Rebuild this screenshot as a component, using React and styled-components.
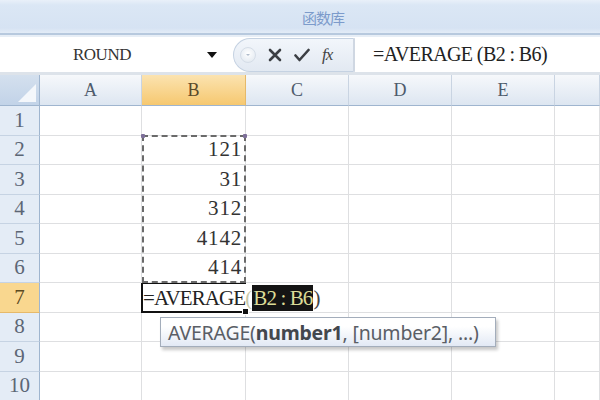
import React from "react";
import styled, { createGlobalStyle } from "styled-components";

const GlobalStyle = createGlobalStyle`
  html, body {
    margin: 0;
    padding: 0;
    background: #fff;
    overflow: hidden;
  }
  #root {
    width: 600px;
    height: 400px;
  }
`;

const Page = styled.div`
  width: 600px;
  height: 400px;
  display: flex;
  flex-direction: column;
  overflow: hidden;
  font-family: "Liberation Serif", "Noto Sans CJK SC", serif;
`;

const Ribbon = styled.div`
  height: 35px;
  flex: none;
  box-sizing: border-box;
  background: linear-gradient(#e9f0f9 0px, #dbe7f5 5px, #d6e3f3 28px, #e3ecf7 33px);
  border-bottom: 2px solid #b7c9de;
  display: flex;
  align-items: center;
  justify-content: center;
  padding-left: 46px;
`;

const GroupLabel = styled.span`
  font-family: "Noto Sans CJK SC", sans-serif;
  font-size: 15px;
  color: #7c9bcb;
  letter-spacing: -1px;
  margin-top: 2px;
`;

const FormulaBar = styled.div`
  height: 40px;
  flex: none;
  box-sizing: border-box;
  background: #fff;
  border-top: 2px solid #e7eef6;
  border-bottom: 3px solid #dde3ea;
  display: flex;
  align-items: center;
`;

const NameBox = styled.div`
  width: 233px;
  flex: none;
  display: flex;
  align-items: center;
  box-sizing: border-box;
  padding-left: 73px;
  padding-right: 16px;
  font-size: 17px;
  color: #333;
  letter-spacing: -0.5px;
`;

const DropArrow = styled.span`
  margin-left: auto;
  width: 0;
  height: 0;
  border-left: 5px solid transparent;
  border-right: 5px solid transparent;
  border-top: 6px solid #111;
`;

const ButtonPill = styled.div`
  width: 122px;
  height: 34px;
  flex: none;
  box-sizing: border-box;
  border-radius: 17px 0 0 17px;
  border: 1px solid #c5d2e2;
  border-right: 2px solid #cfd7e2;
  background: linear-gradient(#f2f6fb, #e2e9f2);
  display: flex;
  align-items: center;
  padding-left: 6px;
  gap: 12px;
`;

const Knob = styled.span`
  width: 14px;
  height: 14px;
  border-radius: 50%;
  background: radial-gradient(circle at 50% 40%, #ffffff, #dde5ee);
  border: 1px solid #d5dde7;
  display: flex;
  align-items: center;
  justify-content: center;
  &::after {
    content: "";
    width: 0;
    height: 0;
    border-left: 2px solid transparent;
    border-right: 2px solid transparent;
    border-top: 2px solid #b0bccb;
  }
`;

const Fx = styled.span`
  font-family: "Liberation Serif", serif;
  font-style: italic;
  font-size: 17px;
  color: #444;
  letter-spacing: -1px;
`;

const FormulaText = styled.div`
  padding-left: 18px;
  font-size: 20px;
  color: #222;
  letter-spacing: -0.6px;
  white-space: nowrap;
`;

const Sheet = styled.div`
  flex: 1;
  display: grid;
  grid-template-columns: 40px 102px 104px 103px 103px 103px 1fr;
  grid-template-rows: 31px repeat(10, 29.5px);
`;

const Corner = styled.div`
  grid-row: 1;
  grid-column: 1;
  background: linear-gradient(#d4e0ee, #c2d3e8);
  border-right: 1px solid #9fb5cf;
  border-bottom: 1px solid #9fb5cf;
  position: relative;
  overflow: hidden;
  &::after {
    content: "";
    position: absolute;
    right: 3px;
    bottom: 3px;
    border-left: 18px solid transparent;
    border-bottom: 18px solid #f4f7fb;
  }
`;

const ColHead = styled.div`
  grid-row: 1;
  grid-column: ${(p) => p.$col};
  display: flex;
  align-items: center;
  justify-content: center;
  font-size: 18px;
  color: ${(p) => (p.$active ? "#5a4a2a" : "#4e5b6c")};
  background: ${(p) =>
    p.$active
      ? "linear-gradient(#fbe3b0, #f6c870)"
      : "linear-gradient(#f6f8fb, #dde6f1)"};
  border-right: 1px solid ${(p) => (p.$active ? "#e5b96a" : "#c9d4e2")};
  border-bottom: 1px solid #9fb5cf;
`;

const RowHead = styled.div`
  grid-row: ${(p) => p.$row};
  grid-column: 1;
  display: flex;
  align-items: center;
  justify-content: center;
  font-size: 21px;
  color: ${(p) => (p.$active ? "#5b4a1f" : "#5c6675")};
  background: ${(p) => (p.$active ? "#f9d78f" : "#e4ecf6")};
  border-right: 1px solid #9fb5cf;
  border-bottom: 1px solid ${(p) => (p.$active ? "#e6b96a" : "#c6d3e3")};
`;

const Cell = styled.div`
  grid-row: ${(p) => p.$row};
  grid-column: ${(p) => p.$col};
  border-right: 1px solid #dedfe1;
  border-bottom: 1px solid #dedfe1;
  display: flex;
  align-items: flex-end;
  justify-content: flex-end;
  padding: 0 3px 2px 0;
  font-size: 21px;
  color: #333;
  letter-spacing: 0.8px;
  min-width: 0;
`;

const Marquee = styled.div`
  grid-column: 3;
  grid-row: 3 / 8;
  margin: -1px 0 0 0;
  border: 2px dashed #6a6a6a;
  position: relative;
  pointer-events: none;
  z-index: 2;
  &::before,
  &::after {
    content: "";
    position: absolute;
    top: -3px;
    width: 4px;
    height: 4px;
    background: #7d6f99;
    border-radius: 1px;
  }
  &::before {
    left: -3px;
  }
  &::after {
    right: -3px;
  }
`;

const ActiveCell = styled.div`
  grid-column: 3;
  grid-row: 8;
  border-left: 2px solid #111;
  border-bottom: 2px solid #111;
  border-top: 1px solid #111;
  margin-left: -1px;
  position: relative;
  z-index: 3;
  display: flex;
  align-items: center;
  white-space: nowrap;
  font-size: 21px;
  color: #222;
  letter-spacing: -0.9px;
  &::after {
    content: "";
    position: absolute;
    right: -3px;
    bottom: -4px;
    width: 5px;
    height: 5px;
    background: #111;
    border: 1px solid #fff;
  }
`;

const EditText = styled.span`
  background: #fff;
  padding-right: 2px;
  display: inline-flex;
  align-items: center;
  margin-top: 2px;
`;

const Paren = styled.span`
  color: ${(p) => p.color};
`;

const RefHighlight = styled.span`
  background: #141414;
  color: #dcdc98;
  padding: 1px 1px 0 1px;
  margin-left: 1px;
`;

const Tip = styled.div`
  position: absolute;
  top: 33px;
  left: 17px;
  width: 336px;
  height: 30px;
  box-sizing: border-box;
  border: 1px solid #a3adbb;
  background: linear-gradient(#ffffff 30%, #e2e9f5);
  box-shadow: 2px 3px 3px rgba(0, 0, 0, 0.22);
  display: flex;
  align-items: center;
  padding-left: 7px;
  font-family: "Noto Sans", "Open Sans", sans-serif;
  font-size: 19.5px;
  color: #5a5e66;
  letter-spacing: -0.2px;
  b {
    color: #43474d;
    font-weight: 700;
  }
`;

const cols = ["A", "B", "C", "D", "E", ""];
const values = { 2: "121", 3: "31", 4: "312", 5: "4142", 6: "414" };

const XIcon = () => (
  <svg width="14" height="14" viewBox="0 0 14 14">
    <path d="M2 2 L12 12 M12 2 L2 12" stroke="#3c3f44" strokeWidth="2.6" strokeLinecap="round" />
  </svg>
);

const CheckIcon = () => (
  <svg width="16" height="14" viewBox="0 0 16 14">
    <path d="M1.5 7.5 L5.5 12 L14.5 2" stroke="#3c3f44" strokeWidth="2.6" fill="none" strokeLinecap="round" strokeLinejoin="round" />
  </svg>
);

export default function App() {
  const rows = [];
  for (let r = 1; r <= 10; r++) {
    rows.push(
      <RowHead key={"h" + r} $row={r + 1} $active={r === 7}>
        {r}
      </RowHead>
    );
    cols.forEach((c, i) => {
      if (c === "B" && r === 7) return;
      rows.push(
        <Cell key={r + "-" + i} $row={r + 1} $col={i + 2}>
          {c === "B" ? values[r] : null}
        </Cell>
      );
    });
  }

  return (
    <Page>
      <GlobalStyle />
      <Ribbon>
        <GroupLabel>函数库</GroupLabel>
      </Ribbon>
      <FormulaBar>
        <NameBox>
          ROUND
          <DropArrow />
        </NameBox>
        <ButtonPill>
          <Knob />
          <XIcon />
          <CheckIcon />
          <Fx>fx</Fx>
        </ButtonPill>
        <FormulaText>=AVERAGE (B2 : B6)</FormulaText>
      </FormulaBar>
      <Sheet>
        <Corner />
        {cols.map((c, i) => (
          <ColHead key={"c" + i} $col={i + 2} $active={c === "B"}>
            {c}
          </ColHead>
        ))}
        {rows}
        <Marquee />
        <ActiveCell>
          <EditText>
            =AVERAGE <Paren color="#c9c9a8">(</Paren>
            <RefHighlight>B2 : B6</RefHighlight>
            <Paren color="#444">)</Paren>
          </EditText>
          <Tip>
            AVERAGE(<b>number1</b>, [number2], ...)
          </Tip>
        </ActiveCell>
      </Sheet>
    </Page>
  );
}
